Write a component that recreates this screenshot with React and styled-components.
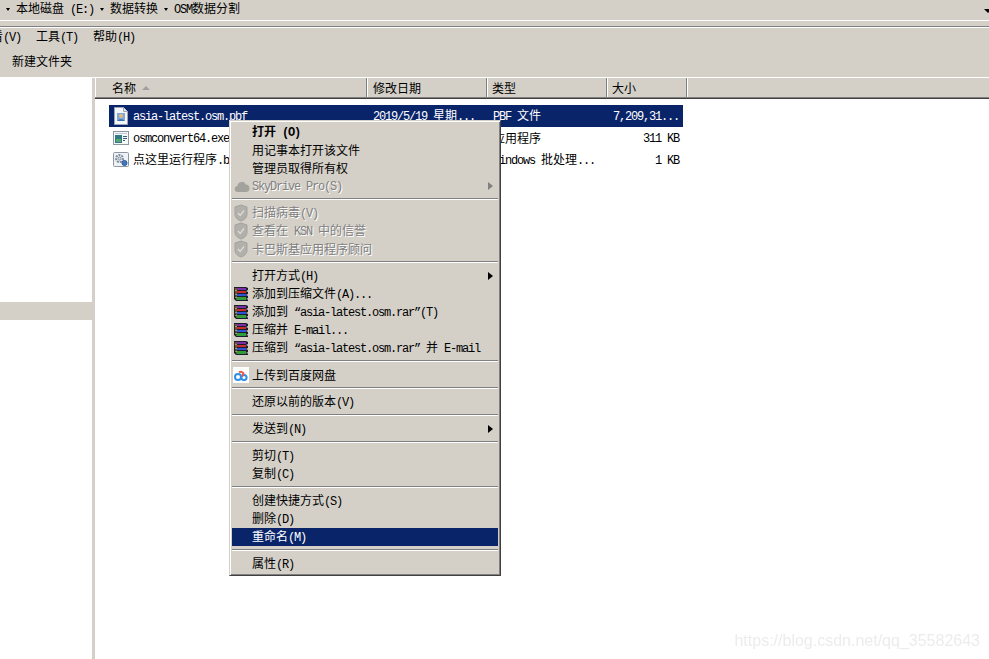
import React from 'react';
import styled, { createGlobalStyle } from 'styled-components';

const Global = createGlobalStyle`
  html, body { margin: 0; padding: 0; background: #fff; }
  body { font-family: "Noto Sans CJK SC", "Liberation Sans", sans-serif; font-size: 12px; color: #000; }
  * { box-sizing: border-box; }
`;

const FACE = '#d4d0c8';

const Page = styled.div`
  position: relative;
  width: 989px;
  height: 659px;
  overflow: hidden;
  display: flex;
  flex-direction: column;
  background: #fff;
  line-height: 16px;
`;
const LatinText = styled.span`
  font-family: "Liberation Mono", monospace;
  font-size: 12px;
  letter-spacing: -1.2px;
`;
const AddressBar = styled.div`
  height: 20px;
  flex: none;
  background: ${FACE};
  display: flex;
  align-items: flex-start;
  white-space: nowrap;
`;
const CrumbArrow = styled.i`
  flex: none;
  width: 0;
  height: 0;
  margin: 8px 6px 0 6px;
  border-left: 2.5px solid transparent;
  border-right: 2.5px solid transparent;
  border-top: 3px solid #000;
`;
const DropArrow = styled.i`
  flex: none;
  width: 0;
  height: 0;
  margin: 9px -3px 0 auto;
  border-left: 4px solid transparent;
  border-right: 4px solid transparent;
  border-top: 4px solid #000;
`;
const Grip = styled.div`
  height: 8px;
  flex: none;
  background: ${FACE};
  border-top: 1px solid #fff;
  border-bottom: 1px solid #fff;
  box-shadow: inset 0 -1px 0 #808080;
`;
const MenuBar = styled.div`
  height: 18px;
  flex: none;
  background: ${FACE};
  display: flex;
  align-items: center;
  gap: 15px;
  white-space: nowrap;
  & > span:first-child { margin-left: -21px; }
`;
const CommandBar = styled.div`
  height: 31px;
  flex: none;
  background: ${FACE};
  padding: 0 0 1px 12px;
  display: flex;
  align-items: center;
`;
const Body = styled.div`
  flex: 1;
  min-height: 0;
  display: flex;
  border-top: 1px solid #fff;
`;
const LeftPane = styled.div`
  width: 92px;
  flex: none;
  background: #fff;
  padding-top: 224px;
`;
const LeftSelection = styled.div`
  height: 18px;
  background: ${FACE};
`;
const Splitter = styled.div`
  width: 3px;
  flex: none;
  background: ${FACE};
`;
const Main = styled.div`
  flex: 1;
  min-width: 0;
`;
const HeaderRow = styled.div`
  display: grid;
  grid-template-columns: 272px 120px 120px 80px 1fr;
  height: 21px;
  background: ${FACE};
  border-bottom: 1px solid #404040;
  box-shadow: inset 0 -1px 0 #808080;
`;
const HeaderCell = styled.div`
  display: flex;
  align-items: center;
  padding: 0 0 0 ${p => p.$pad}px;
  box-shadow: inset 1px 0 0 #fff, ${p => (p.$last ? 'inset 0 0 0 transparent' : 'inset -1px 0 0 #808080')};
  border-bottom: 1px solid #808080;
`;
const SortArrow = styled.i`
  width: 0;
  height: 0;
  margin-left: 6px;
  border-left: 4px solid transparent;
  border-right: 4px solid transparent;
  border-bottom: 4px solid #a0a0a0;
`;
const Rows = styled.div`
  padding: 6px 0 0 14px;
`;
const Row = styled.div`
  display: grid;
  grid-template-columns: 258px 120px 120px 76px;
  width: 574px;
  height: 22px;
  align-items: center;
  white-space: nowrap;
  background: ${p => (p.$selected ? '#0a246a' : 'transparent')};
  color: ${p => (p.$selected ? '#fff' : '#000')};
`;
const NameCell = styled.div`
  display: flex;
  align-items: center;
  gap: 4px;
  padding-left: 4px;
`;
const Cell = styled.div`
  padding-left: ${p => p.$pad}px;
`;
const SizeCell = styled.div`
  text-align: right;
  padding-right: 4px;
`;
const Menu = styled.div`
  position: absolute;
  left: 229px;
  top: 120px;
  width: 272px;
  height: 456px;
  background: ${FACE};
  border-top: 1px solid ${FACE};
  border-left: 1px solid ${FACE};
  border-right: 1px solid #404040;
  border-bottom: 1px solid #404040;
  box-shadow: inset 1px 1px 0 #fff, inset -1px -1px 0 #808080;
  padding: 2px 2px;
  line-height: 18px;
`;
const Item = styled.div`
  height: 18px;
  display: flex;
  align-items: center;
  padding: 0 5px 0 1px;
  white-space: nowrap;
  background: ${p => (p.$active ? '#0a246a' : 'transparent')};
  color: ${p => (p.$active ? '#fff' : p.$disabled ? '#808080' : '#000')};
  font-weight: ${p => (p.$bold ? 700 : 400)};
  text-shadow: ${p => (p.$disabled ? '1px 1px 0 #fff' : 'none')};
`;
const IconSlot = styled.span`
  flex: none;
  width: 16px;
  height: 16px;
  margin-right: 3px;
  display: block;
`;
const Submenu = styled.i`
  width: 0;
  height: 0;
  margin-left: auto;
  border-left: 5px solid ${p => (p.$disabled ? '#808080' : '#000')};
  border-top: 4px solid transparent;
  border-bottom: 4px solid transparent;
`;
const Separator = styled.div`
  height: 2px;
  margin: 3px 0 4px;
  border-top: 1px solid #808080;
  border-bottom: 1px solid #fff;
`;
const Watermark = styled.div`
  position: absolute;
  right: 9px;
  top: 632px;
  font-family: "Liberation Sans", sans-serif;
  font-size: 16px;
  line-height: 18px;
  color: #ececec;
  filter: blur(0.4px);
`;

/* Splits a label so ASCII runs and curly quotes use the narrow Latin face (6px per character). */
function Mixed({ text }) {
  const parts = text.match(/[\x20-\x7e“”]+|[^\x20-\x7e“”]+/g) || [];
  return parts.map((part, i) =>
    /^[\x20-\x7e“”]/.test(part) ? <LatinText key={i}>{part}</LatinText> : <span key={i}>{part}</span>
  );
}

const LabelText = styled.span`
  white-space: pre;
`;
const Label = ({ text }) => <LabelText><Mixed text={text} /></LabelText>;

const RarIcon = () => (
  <svg width="16" height="16" viewBox="0 0 16 16" style={{ display: 'block' }}>
    <path d="M1 1h12l2 1v2l-2 1 2 1v2l-2 1 2 1v2l-2 1 2 .5V15H3L1 13z" fill="#1c1c2c" />
    <path d="M4 2h9v2H4z" fill="#7a2fa8" />
    <path d="M4 5h9v2H4z" fill="#c92c2c" />
    <path d="M4 8h9v2H4z" fill="#2a55d8" />
    <path d="M4 11h9v3H4z" fill="#2f9d3a" />
    <path d="M1.500 2h2.500v12H3z" fill="#6d5a2a" />
    <path d="M2.500 4h1v1h-1zm0 4h1v1h-1zm0 3h1v1h-1z" fill="#e8d890" />
  </svg>
);
const BaiduIcon = () => (
  <svg width="16" height="16" viewBox="0 0 16 16" style={{ display: 'block' }}>
    <rect width="16" height="16" fill="#fff" />
    <circle cx="5" cy="10" r="3" fill="none" stroke="#2f8fe8" strokeWidth="2" />
    <circle cx="11" cy="10.500" r="2.600" fill="none" stroke="#2f8fe8" strokeWidth="2" />
    <path d="M6 5.500a3 3 0 0 1 4.500 1L9 9.500" fill="none" stroke="#e85a4a" strokeWidth="2" />
  </svg>
);
const ShieldIcon = () => (
  <svg width="16" height="18" viewBox="0 0 16 18" style={{ display: 'block', marginTop: -1 }}>
    <path d="M8 1l6 2v7c0 4-3 6-6 7-3-1-6-3-6-7V3z" fill="#b2b0aa" stroke="#a4a29c" />
    <path d="M5 9l2.200 2.500L11 6.500" fill="none" stroke="#dcdad4" strokeWidth="1.400" />
  </svg>
);
const CloudIcon = () => (
  <svg width="16" height="16" viewBox="0 0 16 16" style={{ display: 'block', marginLeft: 1 }}>
    <path d="M4 14a3 3 0 0 1-.6-6A4.500 4.500 0 0 1 12 6.500 3.800 3.800 0 0 1 12.500 14z" fill="#a4a29c" />
  </svg>
);
const PageIcon = () => (
  <svg width="16" height="18" viewBox="0 0 16 18" style={{ display: 'block', margin: '-1px 0' }}>
    <path d="M1.500 .5h9l4 4v13h-13z" fill="#f4f6fa" stroke="#9aa4b4" />
    <path d="M10.500 .5v4h4" fill="#dfe4ec" stroke="#9aa4b4" />
    <rect x="4" y="6" width="8" height="8" fill="#7fa8d8" />
    <circle cx="8" cy="9" r="2" fill="#e8b878" />
    <path d="M4.500 14c.5-2.500 6.500-2.500 7 0z" fill="#3a70b0" />
  </svg>
);
const ExeIcon = () => (
  <svg width="16" height="16" viewBox="0 0 16 16" style={{ display: 'block' }}>
    <rect x=".5" y="1.500" width="15" height="13" fill="#f6f8fa" stroke="#8e96a0" />
    <path d="M2 3h12v1H2z" fill="#c0c8d0" />
    <rect x="2" y="5" width="7" height="8" fill="#2f7a86" />
    <rect x="3" y="9" width="5" height="3" fill="#5aa868" />
    <path d="M10 6h4v1h-4zm0 2h4v1h-4zm0 2h2v1h-2z" fill="#3a5a7a" />
  </svg>
);
const BatIcon = () => (
  <svg width="16" height="16" viewBox="0 0 16 16" style={{ display: 'block' }}>
    <rect x=".5" y=".5" width="15" height="14" rx="1" fill="#eef1f5" stroke="#8e96a0" />
    <circle cx="6.500" cy="6.500" r="3.500" fill="none" stroke="#7c8a9c" strokeWidth="2" strokeDasharray="2 1" />
    <circle cx="6.500" cy="6.500" r="1.500" fill="#dfe6ee" stroke="#7c8a9c" />
    <circle cx="11.500" cy="11" r="2.500" fill="#3f78c0" stroke="#2c5a98" />
  </svg>
);

const menuGroups = [
  [
    { t: '打开 (O)', bold: true },
    { t: '用记事本打开该文件' },
    { t: '管理员取得所有权' },
    { t: 'SkyDrive Pro(S)', icon: <CloudIcon />, disabled: true, sub: true },
  ],
  [
    { t: '扫描病毒(V)', icon: <ShieldIcon />, disabled: true },
    { t: '查看在 KSN 中的信誉', icon: <ShieldIcon />, disabled: true },
    { t: '卡巴斯基应用程序顾问', icon: <ShieldIcon />, disabled: true },
  ],
  [
    { t: '打开方式(H)', sub: true },
    { t: '添加到压缩文件(A)...', icon: <RarIcon /> },
    { t: '添加到 “asia-latest.osm.rar”(T)', icon: <RarIcon /> },
    { t: '压缩并 E-mail...', icon: <RarIcon /> },
    { t: '压缩到 “asia-latest.osm.rar” 并 E-mail', icon: <RarIcon /> },
  ],
  [{ t: '上传到百度网盘', icon: <BaiduIcon /> }],
  [{ t: '还原以前的版本(V)' }],
  [{ t: '发送到(N)', sub: true }],
  [{ t: '剪切(T)' }, { t: '复制(C)' }],
  [{ t: '创建快捷方式(S)' }, { t: '删除(D)' }, { t: '重命名(M)', active: true }],
  [{ t: '属性(R)' }],
];

const files = [
  { icon: <PageIcon />, name: 'asia-latest.osm.pbf', date: '2019/5/19 星期...', type: 'PBF 文件', size: '7,209,31...', selected: true },
  { icon: <ExeIcon />, name: 'osmconvert64.exe', date: '', type: '应用程序', size: '311 KB' },
  { icon: <BatIcon />, name: '点这里运行程序.bat', date: '', type: 'Windows 批处理...', size: '1 KB' },
];

const columns = [
  { label: '名称', pad: 17, sort: true },
  { label: '修改日期', pad: 6 },
  { label: '类型', pad: 5 },
  { label: '大小', pad: 5 },
];

export default function App() {
  return (
    <Page>
      <Global />
      <AddressBar>
        <CrumbArrow /><Label text="本地磁盘 (E:)" />
        <CrumbArrow /><Label text="数据转换" />
        <CrumbArrow /><Label text="OSM数据分割" />
        <DropArrow />
      </AddressBar>
      <Grip />
      <MenuBar>
        <Label text="查看(V)" />
        <Label text="工具(T)" />
        <Label text="帮助(H)" />
      </MenuBar>
      <CommandBar><Label text="新建文件夹" /></CommandBar>
      <Body>
        <LeftPane><LeftSelection /></LeftPane>
        <Splitter />
        <Main>
          <HeaderRow>
            {columns.map(c => (
              <HeaderCell key={c.label} $pad={c.pad}>
                <span>{c.label}</span>
                {c.sort && <SortArrow />}
              </HeaderCell>
            ))}
            <HeaderCell $pad={0} $last />
          </HeaderRow>
          <Rows>
            {files.map(f => (
              <Row key={f.name} $selected={f.selected}>
                <NameCell>{f.icon}<Label text={f.name} /></NameCell>
                <Cell $pad={6}><Label text={f.date} /></Cell>
                <Cell $pad={6}><Label text={f.type} /></Cell>
                <SizeCell><Label text={f.size} /></SizeCell>
              </Row>
            ))}
          </Rows>
        </Main>
      </Body>
      <Menu>
        {menuGroups.map((group, gi) => (
          <React.Fragment key={gi}>
            {gi > 0 && <Separator />}
            {group.map(it => (
              <Item key={it.t} $bold={it.bold} $disabled={it.disabled} $active={it.active}>
                <IconSlot>{it.icon}</IconSlot>
                <Label text={it.t} />
                {it.sub && <Submenu $disabled={it.disabled} />}
              </Item>
            ))}
          </React.Fragment>
        ))}
      </Menu>
      <Watermark>https://blog.csdn.net/qq_35582643</Watermark>
    </Page>
  );
}
